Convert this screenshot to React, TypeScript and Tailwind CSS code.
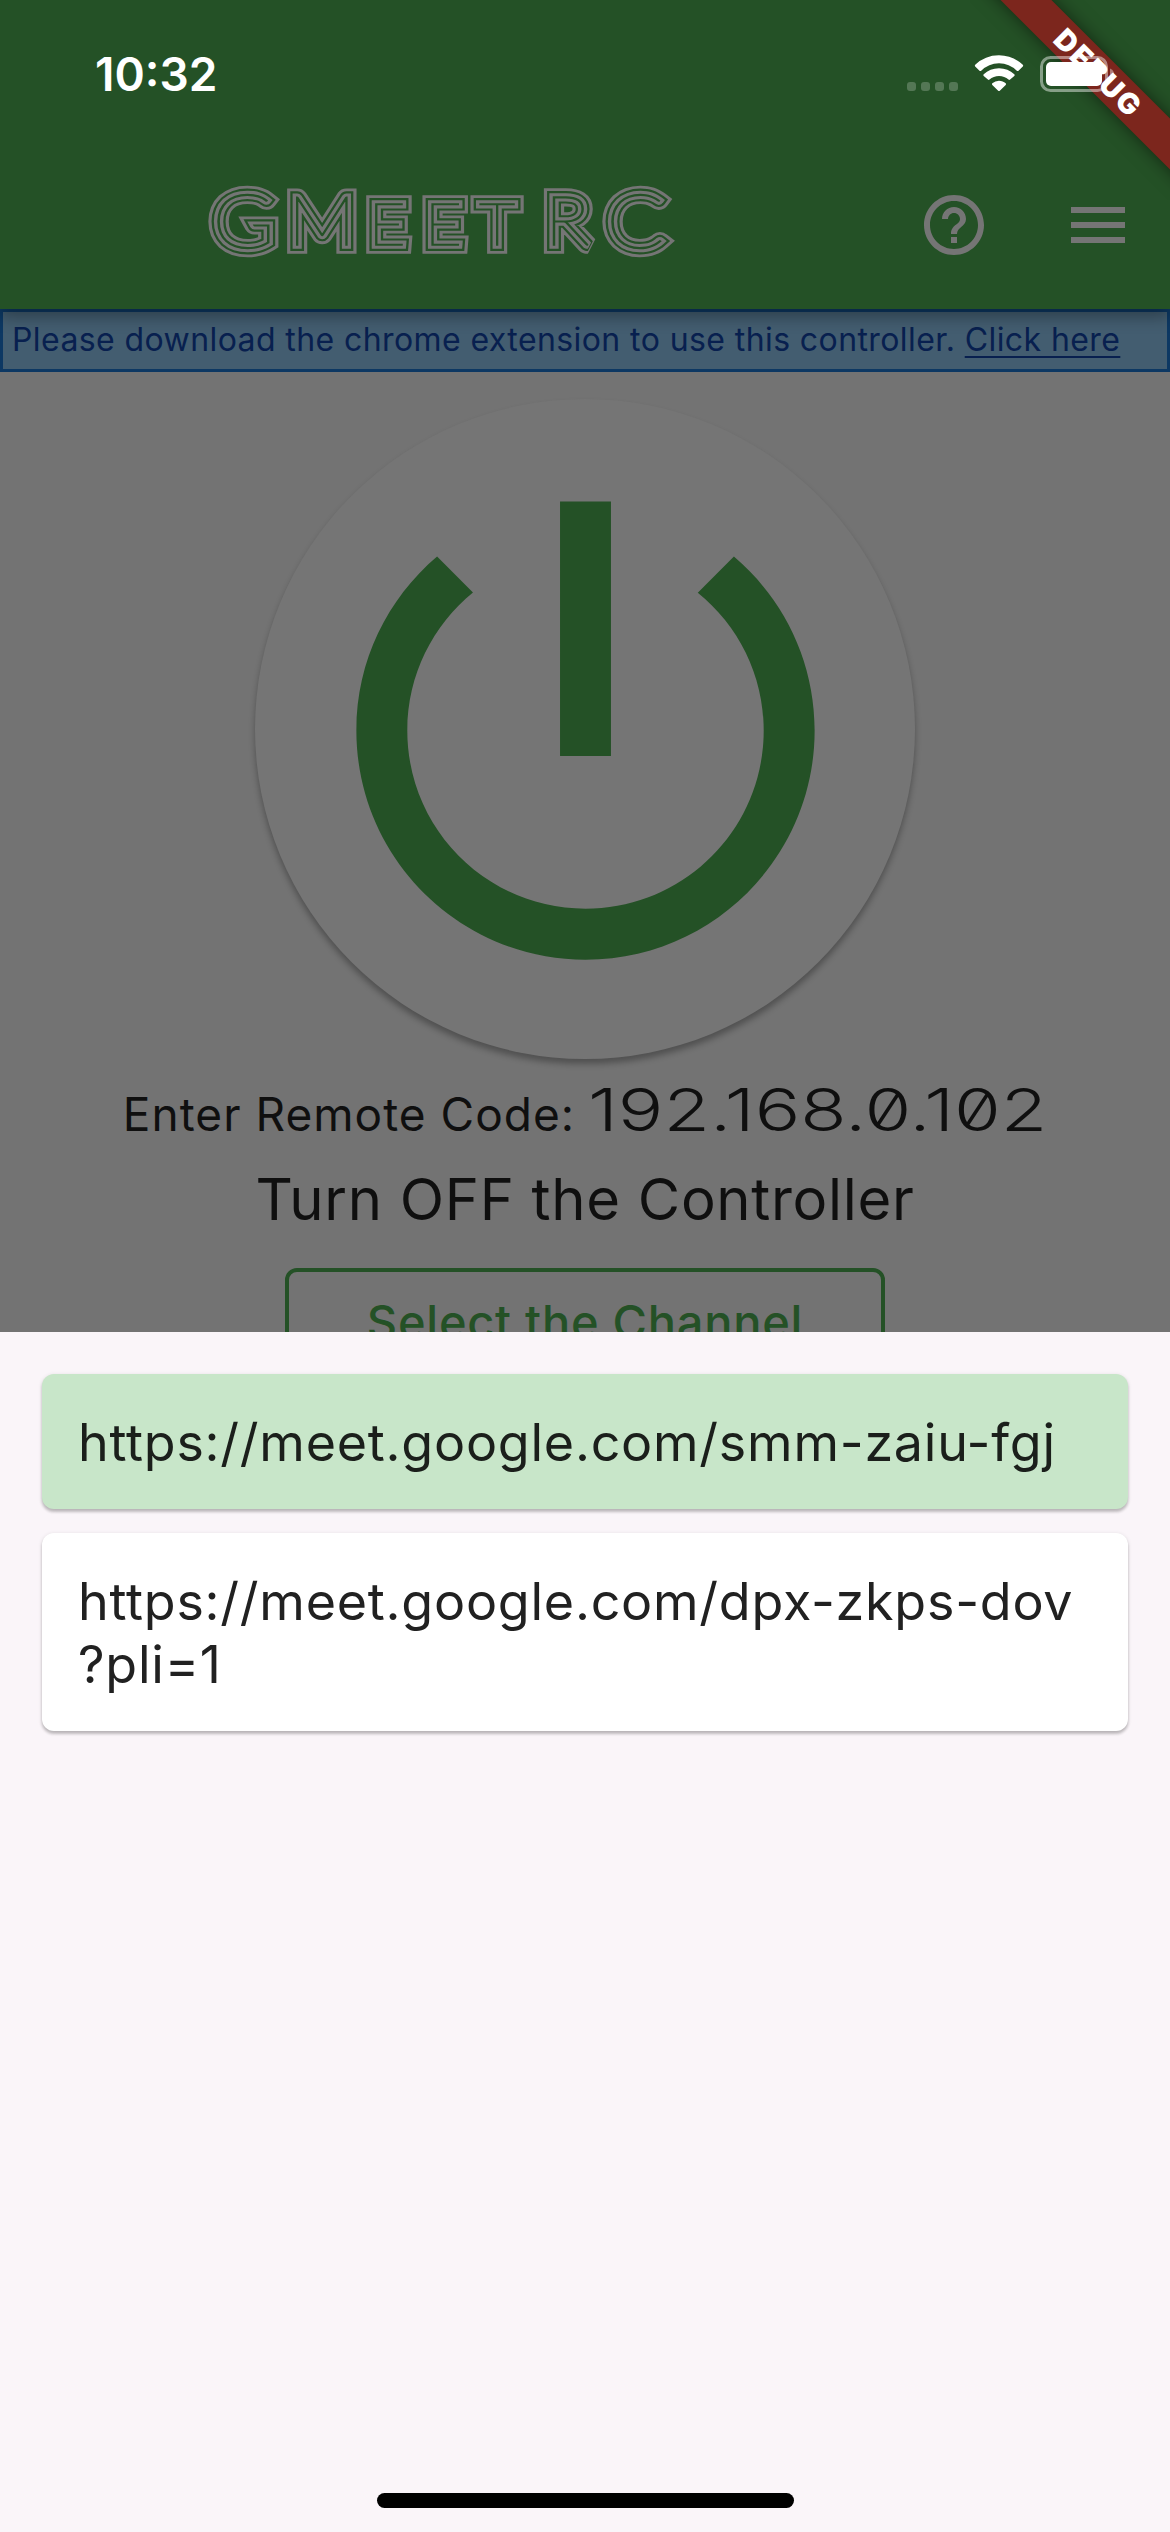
const links = [
  { url: "https://meet.google.com/smm-zaiu-fgj", active: true },
  { url: "https://meet.google.com/dpx-zkps-dov?pli=1", active: false },
];

function Wordmark() {
  return (
    <svg
      viewBox="190 150 500 140"
      className="h-[140px] w-[500px] overflow-visible font-['Lato'] font-thin"
      strokeMiterlimit={2}
      aria-label="GMeet RC"
    >
      <g transform="scale(1.1 1)">
        <g className="fill-[#757575] stroke-[#757575]" strokeWidth={17.6}>
          <text id="wordmark" y="245.5" textAnchor="middle">
            <tspan x="221.5" y="248" fontSize="77">G</tspan>
            <tspan x="292.5" y="245.5" fontSize="69">M</tspan>
            <tspan x="352" fontSize="58">E</tspan>
            <tspan x="403" fontSize="58">E</tspan>
            <tspan x="452" fontSize="57">T</tspan>
            <tspan x="515.5" fontSize="69">R</tspan>
            <tspan x="577.5" y="248" fontSize="77">C</tspan>
          </text>
        </g>
        <use href="#wordmark" className="fill-[#245126] stroke-[#245126]" strokeWidth={11.8} />
        <use href="#wordmark" className="fill-[#757575] stroke-[#757575]" strokeWidth={7.6} />
        <use href="#wordmark" className="fill-[#245126] stroke-[#245126]" strokeWidth={1.4} />
      </g>
    </svg>
  );
}

function StatusIcons() {
  return (
    <svg viewBox="900 50 224 48" className="h-[48px] w-[224px]" fill="#fff">
      <g fillOpacity="0.22">
        <rect x="907" y="82" width="9" height="9" rx="3" />
        <rect x="921" y="82" width="9" height="9" rx="3" />
        <rect x="935" y="82" width="9" height="9" rx="3" />
        <rect x="949" y="82" width="9" height="9" rx="3" />
      </g>
      <path d="M999 55.3c9.2 0 17.6 3.6 23.8 9.5.5.5.5 1.2 0 1.7l-4.3 4.2c-.5.5-1.2.5-1.7 0A25.900 25.900 0 0 0 999 63.200a25.900 25.900 0 0 0-17.800 7.500c-.5.5-1.200.5-1.700 0l-4.300-4.200c-.5-.5-.5-1.200 0-1.700A34.300 34.300 0 0 1 999 55.300z" />
      <path d="M999 68.200c5.900 0 11.200 2.200 15.300 6 .5.5.5 1.200 0 1.700l-4.200 3.700c-.5.5-1.100.5-1.600 0A14.200 14.200 0 0 0 999 76c-3.600 0-6.900 1.300-9.500 3.600-.5.5-1.100.5-1.600 0l-4.200-3.700c-.5-.5-.5-1.200 0-1.700 4.100-3.800 9.400-6 15.300-6z" />
      <path d="M999 80.800c2.600 0 4.900 1 6.700 2.500.5.5.5 1.100 0 1.600l-5.900 5.800c-.5.5-1.100.5-1.600 0l-5.900-5.800c-.5-.5-.5-1.100 0-1.600a10.200 10.200 0 0 1 6.700-2.500z" />
      <rect x="1041.5" y="57.5" width="65" height="33" rx="9" fill="none" stroke="#fff" strokeOpacity="0.45" strokeWidth="3" />
      <path d="M1110 68.5c2.600 1 4 3.200 4 5.500s-1.400 4.500-4 5.500z" fillOpacity="0.4" />
      <rect x="1046" y="62" width="56" height="24" rx="5" />
    </svg>
  );
}

function HelpIcon() {
  return (
    <svg viewBox="0 0 24 24" className="size-[72px] fill-[#757575]">
      <path d="M11 18h2v-2h-2v2zm1-16C6.480 2 2 6.480 2 12s4.480 10 10 10 10-4.480 10-10S17.520 2 12 2zm0 18c-4.410 0-8-3.590-8-8s3.590-8 8-8 8 3.590 8 8-3.590 8-8 8zm0-14c-2.210 0-4 1.790-4 4h2c0-1.100.9-2 2-2s2 .9 2 2c0 2-3 1.750-3 5h2c0-2.250 3-2.500 3-5 0-2.210-1.790-4-4-4z" />
    </svg>
  );
}

function MenuIcon() {
  return (
    <svg viewBox="0 0 24 24" className="size-[72px] fill-[#757575]">
      <path d="M3 18h18v-2H3v2zm0-5h18v-2H3v2zm0-7v2h18V6H3z" />
    </svg>
  );
}

function PowerIcon() {
  return (
    <svg viewBox="0 0 24 24" className="mt-[2px] size-[611px] fill-[#245126]">
      <path d="M13 3h-2v10h2V3zm4.830 2.170l-1.420 1.420C17.990 7.860 19 9.810 19 12c0 3.870-3.130 7-7 7s-7-3.130-7-7c0-2.190 1.010-4.140 2.580-5.420L6.170 5.170C4.230 6.820 3 9.260 3 12c0 4.970 4.030 9 9 9s9-4.030 9-9c0-2.740-1.230-5.180-3.170-6.830z" />
    </svg>
  );
}

export default function App() {
  return (
    <div className="flex h-[2532px] w-[1170px] flex-col overflow-hidden bg-[#737373] font-['Inter',sans-serif]">
      <header className="relative z-10 h-[309px] shrink-0 bg-[#245126] shadow-[0_8px_15px_rgba(0,0,0,0.32)]">
        <div className="relative z-20 flex h-[141px] items-center justify-between pt-[7px] pr-[46px] pl-[95px]">
          <span className="text-[46px] leading-none font-semibold text-white">10:32</span>
          <StatusIcons />
        </div>
        <div className="flex h-[168px] items-center pr-[36px] pl-[190px]">
          <div className="mt-[-10px] flex-1">
            <Wordmark />
          </div>
          <div className="flex gap-[72px]">
            <HelpIcon />
            <MenuIcon />
          </div>
        </div>
        <div className="absolute top-0 right-0 z-10 size-[200px] overflow-hidden">
          <div className="absolute top-[54px] left-[-72px] flex h-[36px] w-[400px] rotate-45 items-center justify-center bg-[#7c261d] pl-[2px] text-[29px] leading-none font-black tracking-[2px] text-white shadow-[0_0_18px_rgba(0,0,0,0.5)]">
            DEBUG
          </div>
        </div>
      </header>

      <main className="flex h-[1023px] shrink-0 flex-col items-center overflow-hidden">
        <div className="flex h-[63px] w-full shrink-0 items-center border-[3px] border-[#0d3863] bg-[#435d70] pb-[2px] pl-[9px] text-[32px] leading-[40px] tracking-[0.41px] whitespace-pre text-[#08204f]">
          <span>Please download the chrome extension to use this controller. </span>
          <a className="underline decoration-[2px] underline-offset-[5px]">Click here</a>
        </div>
        <button className="mt-[27px] flex size-[660px] shrink-0 items-center justify-center rounded-full bg-[#757575] shadow-[0_5px_6px_rgba(0,0,0,0.3)]">
          <PowerIcon />
        </button>
        <div className="mt-[21px] flex h-[66px] shrink-0 items-baseline justify-center gap-[13px] whitespace-nowrap text-[#0f0f0f]">
          <span className="text-[46px] leading-[60px] tracking-[1.02px]">Enter Remote Code:</span>
          <span className="w-[459px] text-[59px] leading-[60px] font-[330] [font-feature-settings:'zero']">
            <span className="inline-block origin-left scale-x-[1.285]">192.168.0.102</span>
          </span>
        </div>
        <p className="mt-[17px] shrink-0 text-[58px] leading-[72px] tracking-[0.7px] text-[#0f0f0f]">
          Turn OFF the Controller
        </p>
        <button className="mt-[33px] flex h-[132px] w-[600px] shrink-0 justify-center rounded-[12px] border-[4.5px] border-[#245126] pt-[20px] text-[47px] leading-[60px] font-medium tracking-[0.74px] text-[#245126]">
          Select the Channel
        </button>
      </main>

      <section className="flex flex-1 flex-col gap-[24px] bg-[#faf5f9] px-[42px] pt-[42px]">
        {links.map((link) => (
          <div
            key={link.url}
            className={
              "rounded-[12px] pt-[37px] pr-[40px] pb-[35px] pl-[36px] text-[52px] leading-[63px] tracking-[0.76px] break-all shadow-[0_3px_3px_rgba(0,0,0,0.2),0_1px_4px_rgba(0,0,0,0.12)] " +
              (link.active ? "bg-[#c8e6c9] text-[#1b1f1b]" : "bg-white text-[#212121]")
            }
          >
            {link.url.split("?").map((part, i) => (
              <span key={part} className="mr-[-12px] block">
                {i > 0 ? "?" + part : part}
              </span>
            ))}
          </div>
        ))}
        <div className="mt-auto mb-[24px] h-[15px] w-[417px] self-center rounded-full bg-black" />
      </section>
    </div>
  );
}
